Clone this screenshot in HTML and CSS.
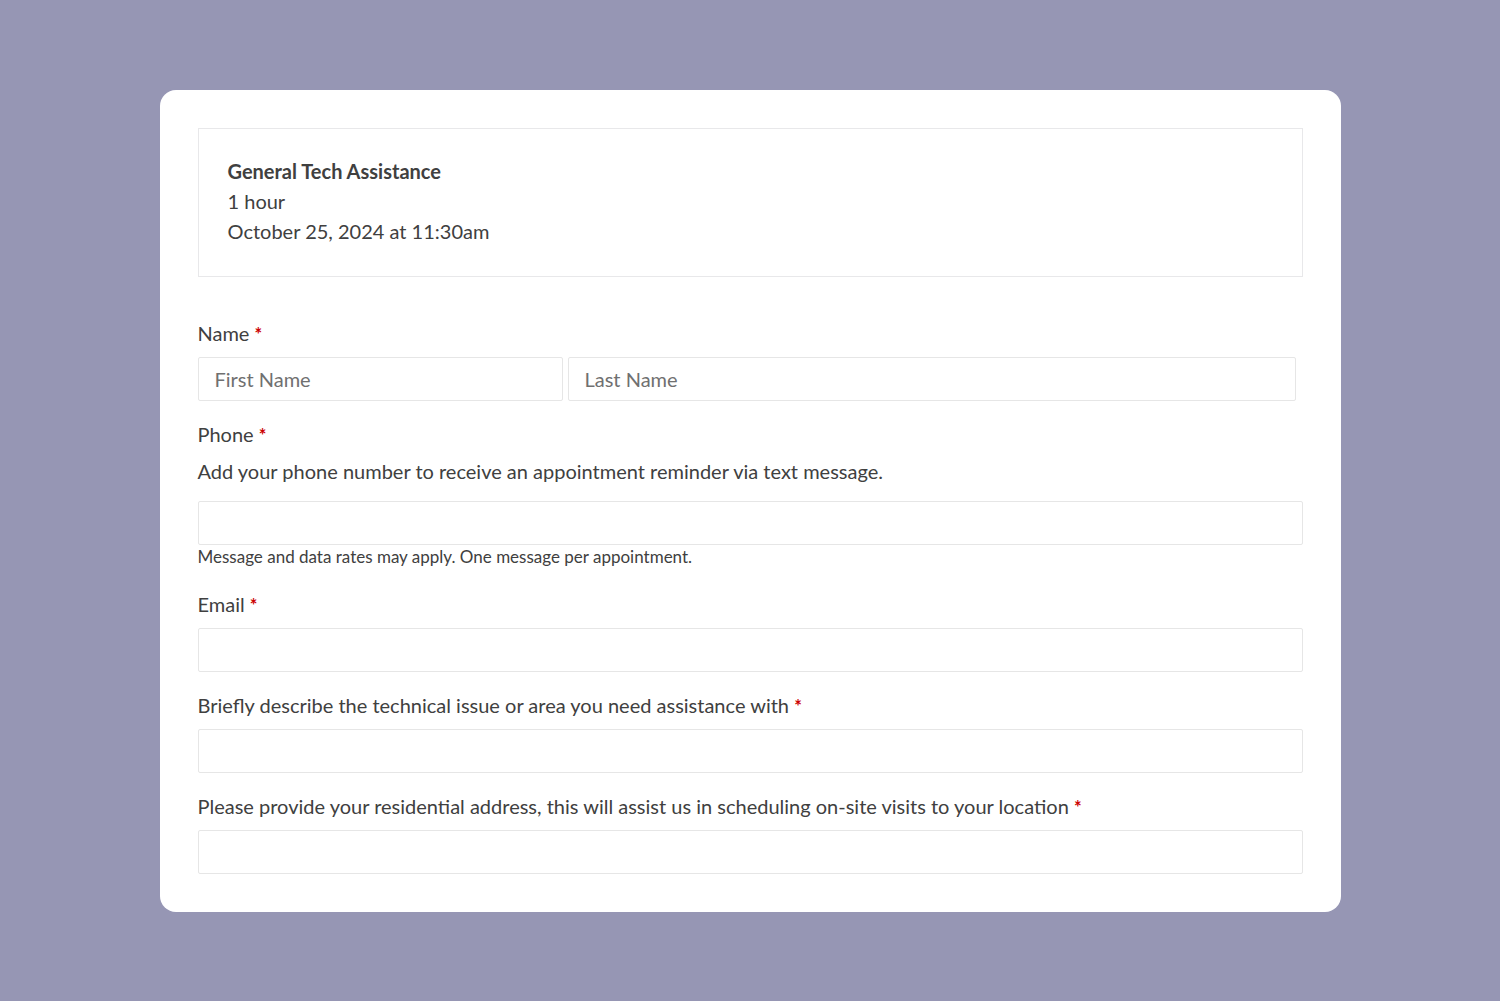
FILE: index.html
```html
<!DOCTYPE html>
<html lang="en">
<head>
    <meta charset="UTF-8">
    <meta name="viewport" content="width=device-width, initial-scale=1.0">
    <title>Book an Appointment - General Tech Assistance</title>
    <link rel="stylesheet" href="styles.css">
</head>
<body>

<div class="card">

    <!-- Riepilogo appuntamento -->
    <div class="summary">
        <div class="summary-title">General Tech Assistance</div>
        <div>1 hour</div>
        <div>October 25, 2024 at 11:30am</div>
    </div>

    <form class="booking-form">

        <div class="field">
            <label>Name <span class="req">*</span></label>
            <div class="name-row">
                <input type="text" class="first-name" placeholder="First Name">
                <input type="text" class="last-name" placeholder="Last Name">
            </div>
        </div>

        <div class="field field-note">
            <label>Phone <span class="req">*</span></label>
            <p class="description">Add your phone number to receive an appointment reminder via text message.</p>
            <input type="tel">
            <p class="note">Message and data rates may apply. One message per appointment.</p>
        </div>

        <div class="field">
            <label>Email <span class="req">*</span></label>
            <input type="email">
        </div>

        <div class="field">
            <label>Briefly describe the technical issue or area you need assistance with <span class="req">*</span></label>
            <input type="text">
        </div>

        <div class="field">
            <label>Please provide your residential address, this will assist us in scheduling on-site visits to your location <span class="req">*</span></label>
            <input type="text">
        </div>

    </form>

</div>

</body>
</html>
```

FILE: styles.css
```css
/* Stili di base */
body {
    font-family: Lato, "Noto Sans", sans-serif;
    background-color: #9696b4;
    margin: 0;
    padding: 90px 0 0;
    color: #404040;
    font-size: 20px;
}

.card {
    width: 1105px;
    margin: 0 auto;
    padding: 38px;
    background-color: #fff;
    border-radius: 16px;
}

.summary {
    border: 1px solid #e8e8ea;
    padding: 27px 29px 30px;
    line-height: 30px;
}

.summary-title {
    font-weight: bold;
}

.booking-form {
    margin-top: 43px;
}

.field {
    margin-bottom: 20px;
}

.field-note {
    margin-bottom: 24px;
}

.field:last-child {
    margin-bottom: 0;
}

label {
    display: block;
    line-height: 26px;
    margin-bottom: 11px;
}

.req {
    color: #c00;
    font-size: 18px;
    font-weight: bold;
    line-height: 1;
}

input {
    display: block;
    box-sizing: border-box;
    width: 100%;
    height: 44px;
    margin: 0;
    padding: 0 16px;
    border: 1px solid #e6e6e6;
    border-radius: 2px;
    font-family: inherit;
    font-size: 20px;
    color: #404040;
    background: #fff;
}

input::placeholder {
    color: #707070;
}

.name-row {
    display: flex;
    gap: 5px;
    padding-right: 7px;
}

.name-row .first-name {
    width: 365px;
}

.name-row .last-name {
    flex: 1;
}

.description {
    margin: 0 0 17px;
    line-height: 26px;
}

.note {
    margin: 2px 0 0;
    font-size: 17px;
    line-height: 20px;
}
```
